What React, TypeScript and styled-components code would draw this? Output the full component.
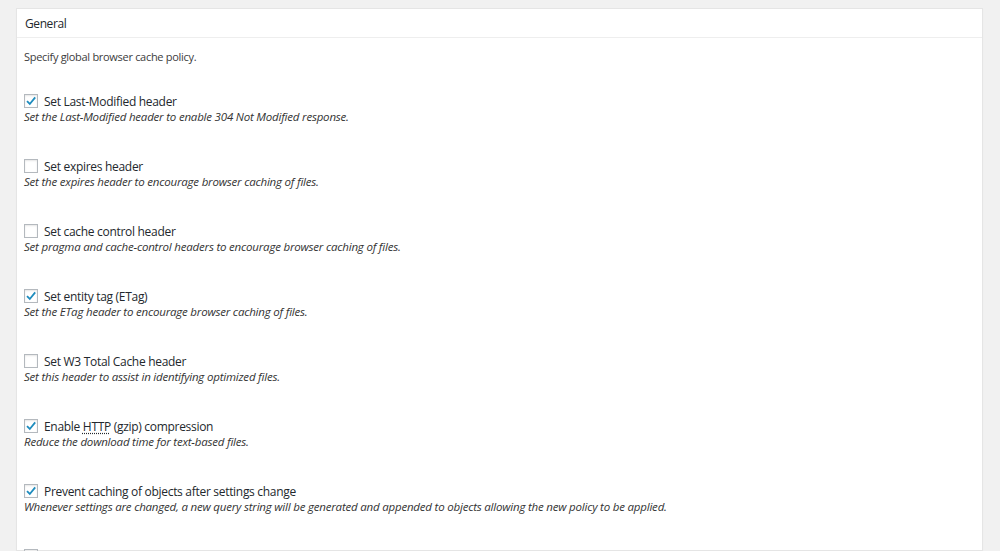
import React from 'react'
import styled, { createGlobalStyle } from 'styled-components'

const GlobalStyle = createGlobalStyle`
  html, body {
    margin: 0;
    padding: 0;
    background: #f1f1f1;
  }
  body {
    font-family: "Open Sans", "Noto Sans", sans-serif;
    color: #444;
    overflow: hidden;
  }
`

const Page = styled.div`
  padding: 8px 17px 0 16px;
  height: 551px;
  box-sizing: border-box;
`

const Panel = styled.div`
  background: #fff;
  border: 1px solid #e5e5e5;
  box-shadow: 0 1px 1px rgba(0, 0, 0, 0.04);
  height: 100%;
  box-sizing: border-box;
`

const Header = styled.h3`
  margin: 0;
  padding: 0 8px;
  height: 28px;
  display: flex;
  align-items: center;
  font-size: 12px;
  letter-spacing: -0.4px;
  font-weight: 400;
  color: #23282d;
  border-bottom: 1px solid #eee;
`

const Body = styled.div`
  padding: 10px 7px 0;
  display: flex;
  flex-direction: column;
`

const Intro = styled.p`
  margin: 0 0 27px;
  font-size: 11px;
  letter-spacing: -0.3px;
  line-height: 18px;
  color: #3c3c3c;
`

const List = styled.div`
  display: flex;
  flex-direction: column;
  row-gap: 34px;
`

const Item = styled.div`
  display: flex;
  flex-direction: column;
`

const LabelRow = styled.label`
  display: flex;
  align-items: center;
  column-gap: 6px;
  height: 16px;
  font-size: 12px;
  letter-spacing: -0.3px;
  color: #23282d;
`

const Box = styled.span<{ $checked: boolean }>`
  width: 14px;
  height: 14px;
  box-sizing: border-box;
  border: 1px solid #b4b9be;
  box-shadow: inset 0 1px 2px rgba(0, 0, 0, 0.1);
  background: #fff;
  display: flex;
  align-items: center;
  justify-content: center;
  flex: none;
`

const Description = styled.span`
  font-size: 11.5px;
  letter-spacing: -0.2px;
  line-height: 15px;
  font-style: italic;
  color: #333;
`

const Abbr = styled.abbr`
  text-decoration: underline dotted;
  text-underline-offset: 2px;
`

const Check = () => (
  <svg width="12" height="12" viewBox="0 0 12 12">
    <path d="M2 6.2 L4.8 9 L10.2 2.4" fill="none" stroke="#1e8cbe" strokeWidth="1.8" />
  </svg>
)

type Option = {
  label: React.ReactNode
  description: string
  checked: boolean
}

const options: Option[] = [
  {
    label: 'Set Last-Modified header',
    description: 'Set the Last-Modified header to enable 304 Not Modified response.',
    checked: true,
  },
  {
    label: 'Set expires header',
    description: 'Set the expires header to encourage browser caching of files.',
    checked: false,
  },
  {
    label: 'Set cache control header',
    description: 'Set pragma and cache-control headers to encourage browser caching of files.',
    checked: false,
  },
  {
    label: 'Set entity tag (ETag)',
    description: 'Set the ETag header to encourage browser caching of files.',
    checked: true,
  },
  {
    label: 'Set W3 Total Cache header',
    description: 'Set this header to assist in identifying optimized files.',
    checked: false,
  },
  {
    label: <>Enable <Abbr title="Hypertext Transfer Protocol">HTTP</Abbr> (gzip) compression</>,
    description: 'Reduce the download time for text-based files.',
    checked: true,
  },
  {
    label: 'Prevent caching of objects after settings change',
    description:
      'Whenever settings are changed, a new query string will be generated and appended to objects allowing the new policy to be applied.',
    checked: true,
  },
]

const App: React.FC = () => {
  return (
    <Page>
      <GlobalStyle />
      <Panel>
        <Header>General</Header>
        <Body>
          <Intro>Specify global browser cache policy.</Intro>
          <List>
            {options.map((o, i) => (
              <Item key={i}>
                <LabelRow>
                  <Box $checked={o.checked}>{o.checked ? <Check /> : null}</Box>
                  <span>{o.label}</span>
                </LabelRow>
                <Description>{o.description}</Description>
              </Item>
            ))}
            <Item>
              <LabelRow>
                <Box $checked={false} />
              </LabelRow>
            </Item>
          </List>
        </Body>
      </Panel>
    </Page>
  )
}

export default App
